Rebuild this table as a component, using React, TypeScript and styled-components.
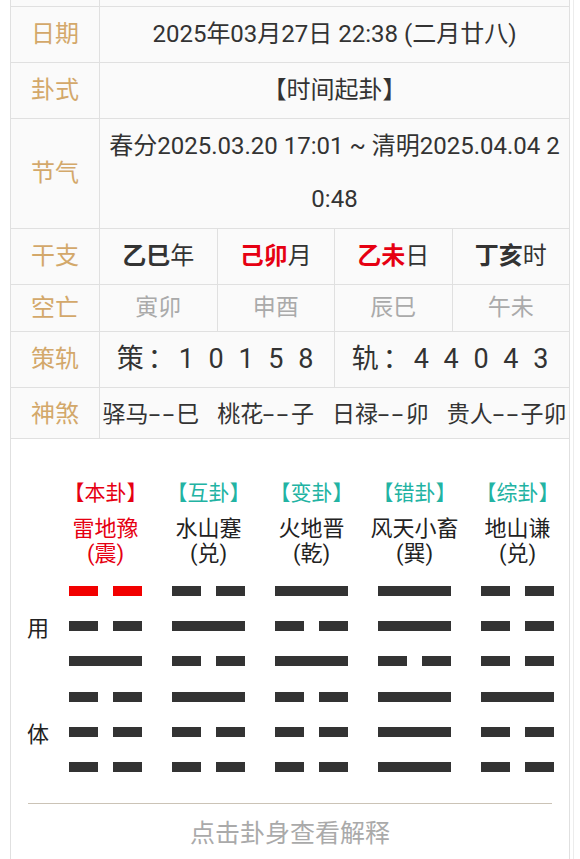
import React from "react";
import styled, { createGlobalStyle } from "styled-components";

const Global = createGlobalStyle`
  html, body { margin: 0; padding: 0; background: #fff; }
  body { font-family: Roboto, "Noto Sans CJK SC", sans-serif; color: #333; }
`;

const Frame = styled.div`
  margin-left: 10px;
  width: 563px;
  height: 859px;
  overflow: hidden;
  border-right: 1px solid #ececec;
`;

const Table = styled.div`
  width: 560px;
  box-sizing: border-box;
  border-left: 1px solid #e0e0e0;
  border-right: 1px solid #e0e0e0;
  background: #fafafa;
`;

const Row = styled.div<{ $h: number; $lift?: number }>`
  display: grid;
  grid-template-columns: 88px 1fr;
  height: ${(p) => p.$h}px;
  box-sizing: border-box;
  border-bottom: 1px solid #e0e0e0;
  --lift: ${(p) => p.$lift ?? 6}px;
`;

const Label = styled.div`
  display: flex;
  align-items: center;
  justify-content: center;
  padding-bottom: var(--lift);
  color: #d3a86a;
  font-size: 24px;
`;

const Value = styled.div<{ $size?: number; $color?: string }>`
  border-left: 1px solid #e0e0e0;
  display: flex;
  align-items: center;
  justify-content: center;
  padding-bottom: var(--lift);
  text-align: center;
  white-space: nowrap;
  font-size: ${(p) => p.$size ?? 24}px;
  color: ${(p) => p.$color ?? "#333"};
`;

const WrapValue = styled.div`
  border-left: 1px solid #e0e0e0;
  padding: 1px 5px;
  font-size: 24px;
  line-height: 53px;
  text-align: center;
  word-break: break-all;
  color: #333;
`;

const Split = styled.div<{ $n: number }>`
  display: grid;
  grid-template-columns: repeat(${(p) => p.$n}, 1fr);
`;

const Strong = styled.b<{ $red?: boolean }>`
  font-weight: 700;
  color: ${(p) => (p.$red ? "#e60012" : "#333")};
`;

const Spaced = styled.span`
  letter-spacing: 4px;
`;

const Groups = styled.div`
  border-left: 1px solid #e0e0e0;
  display: flex;
  align-items: center;
  justify-content: center;
  padding-bottom: var(--lift);
  gap: 18px;
  font-size: 23px;
  color: #333;
  white-space: nowrap;
`;

const Dash = styled.span`
  display: inline-block;
  letter-spacing: 1.5px;
  transform: scaleX(1.8);
  margin: 0 6px;
`;

const Card = styled.div`
  width: 560px;
  box-sizing: border-box;
  border-left: 1px solid #e0e0e0;
  border-right: 1px solid #e0e0e0;
  background: #fff;
  padding-top: 42px;
  height: 420px;
`;

const HexGrid = styled.div`
  display: grid;
  grid-template-columns: 43px repeat(5, 1fr);
  row-gap: 20px;
`;

const Head = styled.div`
  display: flex;
  flex-direction: column;
  align-items: center;
`;

const Kind = styled.div<{ $main?: boolean }>`
  font-size: 21px;
  line-height: 25px;
  margin-bottom: 10px;
  color: ${(p) => (p.$main ? "#e60012" : "#22b3a3")};
`;

const Name = styled.div<{ $main?: boolean }>`
  font-size: 22px;
  line-height: 25px;
  color: ${(p) => (p.$main ? "#e60012" : "#222")};
  white-space: nowrap;
`;

const Stack = styled.div`
  display: flex;
  flex-direction: column;
  align-items: center;
  gap: 25.2px;
`;

const Side = styled.div`
  display: flex;
  flex-direction: column;
  align-items: flex-end;
  padding-right: 5px;
  gap: 25.2px;
`;

const Slot = styled.div`
  height: 10px;
  display: flex;
  align-items: center;
  font-size: 22px;
  color: #222;
`;

const Line = styled.div`
  width: 73px;
  height: 10px;
  display: flex;
  justify-content: space-between;
`;

const Seg = styled.div<{ $w: number; $red?: boolean }>`
  width: ${(p) => p.$w}px;
  height: 10px;
  background: ${(p) => (p.$red ? "#f20000" : "#333")};
`;

const Divider = styled.div`
  margin: 31px 17px 0;
  height: 1px;
  background: #cbc3b6;
`;

const Hint = styled.div`
  padding-top: 10px;
  line-height: 40px;
  font-size: 25px;
  color: #aaa;
  text-align: center;
`;

type Hex = { kind: string; name: string; gua: string; lines: number[]; main?: boolean };

const hexes: Hex[] = [
  { kind: "【本卦】", name: "雷地豫", gua: "(震)", lines: [0, 0, 1, 0, 0, 0], main: true },
  { kind: "【互卦】", name: "水山蹇", gua: "(兑)", lines: [0, 1, 0, 1, 0, 0] },
  { kind: "【变卦】", name: "火地晋", gua: "(乾)", lines: [1, 0, 1, 0, 0, 0] },
  { kind: "【错卦】", name: "风天小畜", gua: "(巽)", lines: [1, 1, 0, 1, 1, 1] },
  { kind: "【综卦】", name: "地山谦", gua: "(兑)", lines: [0, 0, 0, 1, 0, 0] },
];

const ganzhi = [
  { gz: "乙巳", unit: "年", red: false },
  { gz: "己卯", unit: "月", red: true },
  { gz: "乙未", unit: "日", red: true },
  { gz: "丁亥", unit: "时", red: false },
];

const shensha = [
  ["驿马", "巳"],
  ["桃花", "子"],
  ["日禄", "卯"],
  ["贵人", "子卯"],
];

export default function App() {
  return (
    <>
      <Global />
      <Frame>
        <Table>
          <Row $h={7}>
            <div />
            <Value />
          </Row>
          <Row $h={56}>
            <Label>日期</Label>
            <Value>2025年03月27日 22:38 (二月廿八)</Value>
          </Row>
          <Row $h={56}>
            <Label>卦式</Label>
            <Value>【时间起卦】</Value>
          </Row>
          <Row $h={110}>
            <Label>节气</Label>
            <WrapValue>春分2025.03.20 17:01 ~ 清明2025.04.04 20:48</WrapValue>
          </Row>
          <Row $h={56}>
            <Label>干支</Label>
            <Split $n={4}>
              {ganzhi.map((g) => (
                <Value key={g.gz}>
                  <Strong $red={g.red}>{g.gz}</Strong>
                  {g.unit}
                </Value>
              ))}
            </Split>
          </Row>
          <Row $h={47}>
            <Label>空亡</Label>
            <Split $n={4}>
              {["寅卯", "申酉", "辰巳", "午未"].map((k) => (
                <Value key={k} $size={23} $color="#aaa">
                  {k}
                </Value>
              ))}
            </Split>
          </Row>
          <Row $h={56}>
            <Label>策轨</Label>
            <Split $n={2}>
              <Value $size={27}>
                <Spaced>策：1 0 1 5 8</Spaced>
              </Value>
              <Value $size={27}>
                <Spaced>轨：4 4 0 4 3</Spaced>
              </Value>
            </Split>
          </Row>
          <Row $h={51} $lift={3}>
            <Label>神煞</Label>
            <Groups>
              {shensha.map(([a, b]) => (
                <span key={a}>
                  {a}
                  <Dash>--</Dash>
                  {b}
                </span>
              ))}
            </Groups>
          </Row>
        </Table>
        <Card>
          <HexGrid>
            <div />
            {hexes.map((h) => (
              <Head key={h.kind}>
                <Kind $main={h.main}>{h.kind}</Kind>
                <Name $main={h.main}>{h.name}</Name>
                <Name $main={h.main}>{h.gua}</Name>
              </Head>
            ))}
            <Side>
              {["", "用", "", "", "体", ""].map((t, i) => (
                <Slot key={i}>{t}</Slot>
              ))}
            </Side>
            {hexes.map((h) => (
              <Stack key={h.kind}>
                {h.lines.map((yang, i) => {
                  const red = h.main && i === 0;
                  return (
                    <Line key={i}>
                      {yang ? (
                        <Seg $w={73} $red={red} />
                      ) : (
                        <>
                          <Seg $w={29} $red={red} />
                          <Seg $w={29} $red={red} />
                        </>
                      )}
                    </Line>
                  );
                })}
              </Stack>
            ))}
          </HexGrid>
          <Divider />
          <Hint>点击卦身查看解释</Hint>
        </Card>
      </Frame>
    </>
  );
}
